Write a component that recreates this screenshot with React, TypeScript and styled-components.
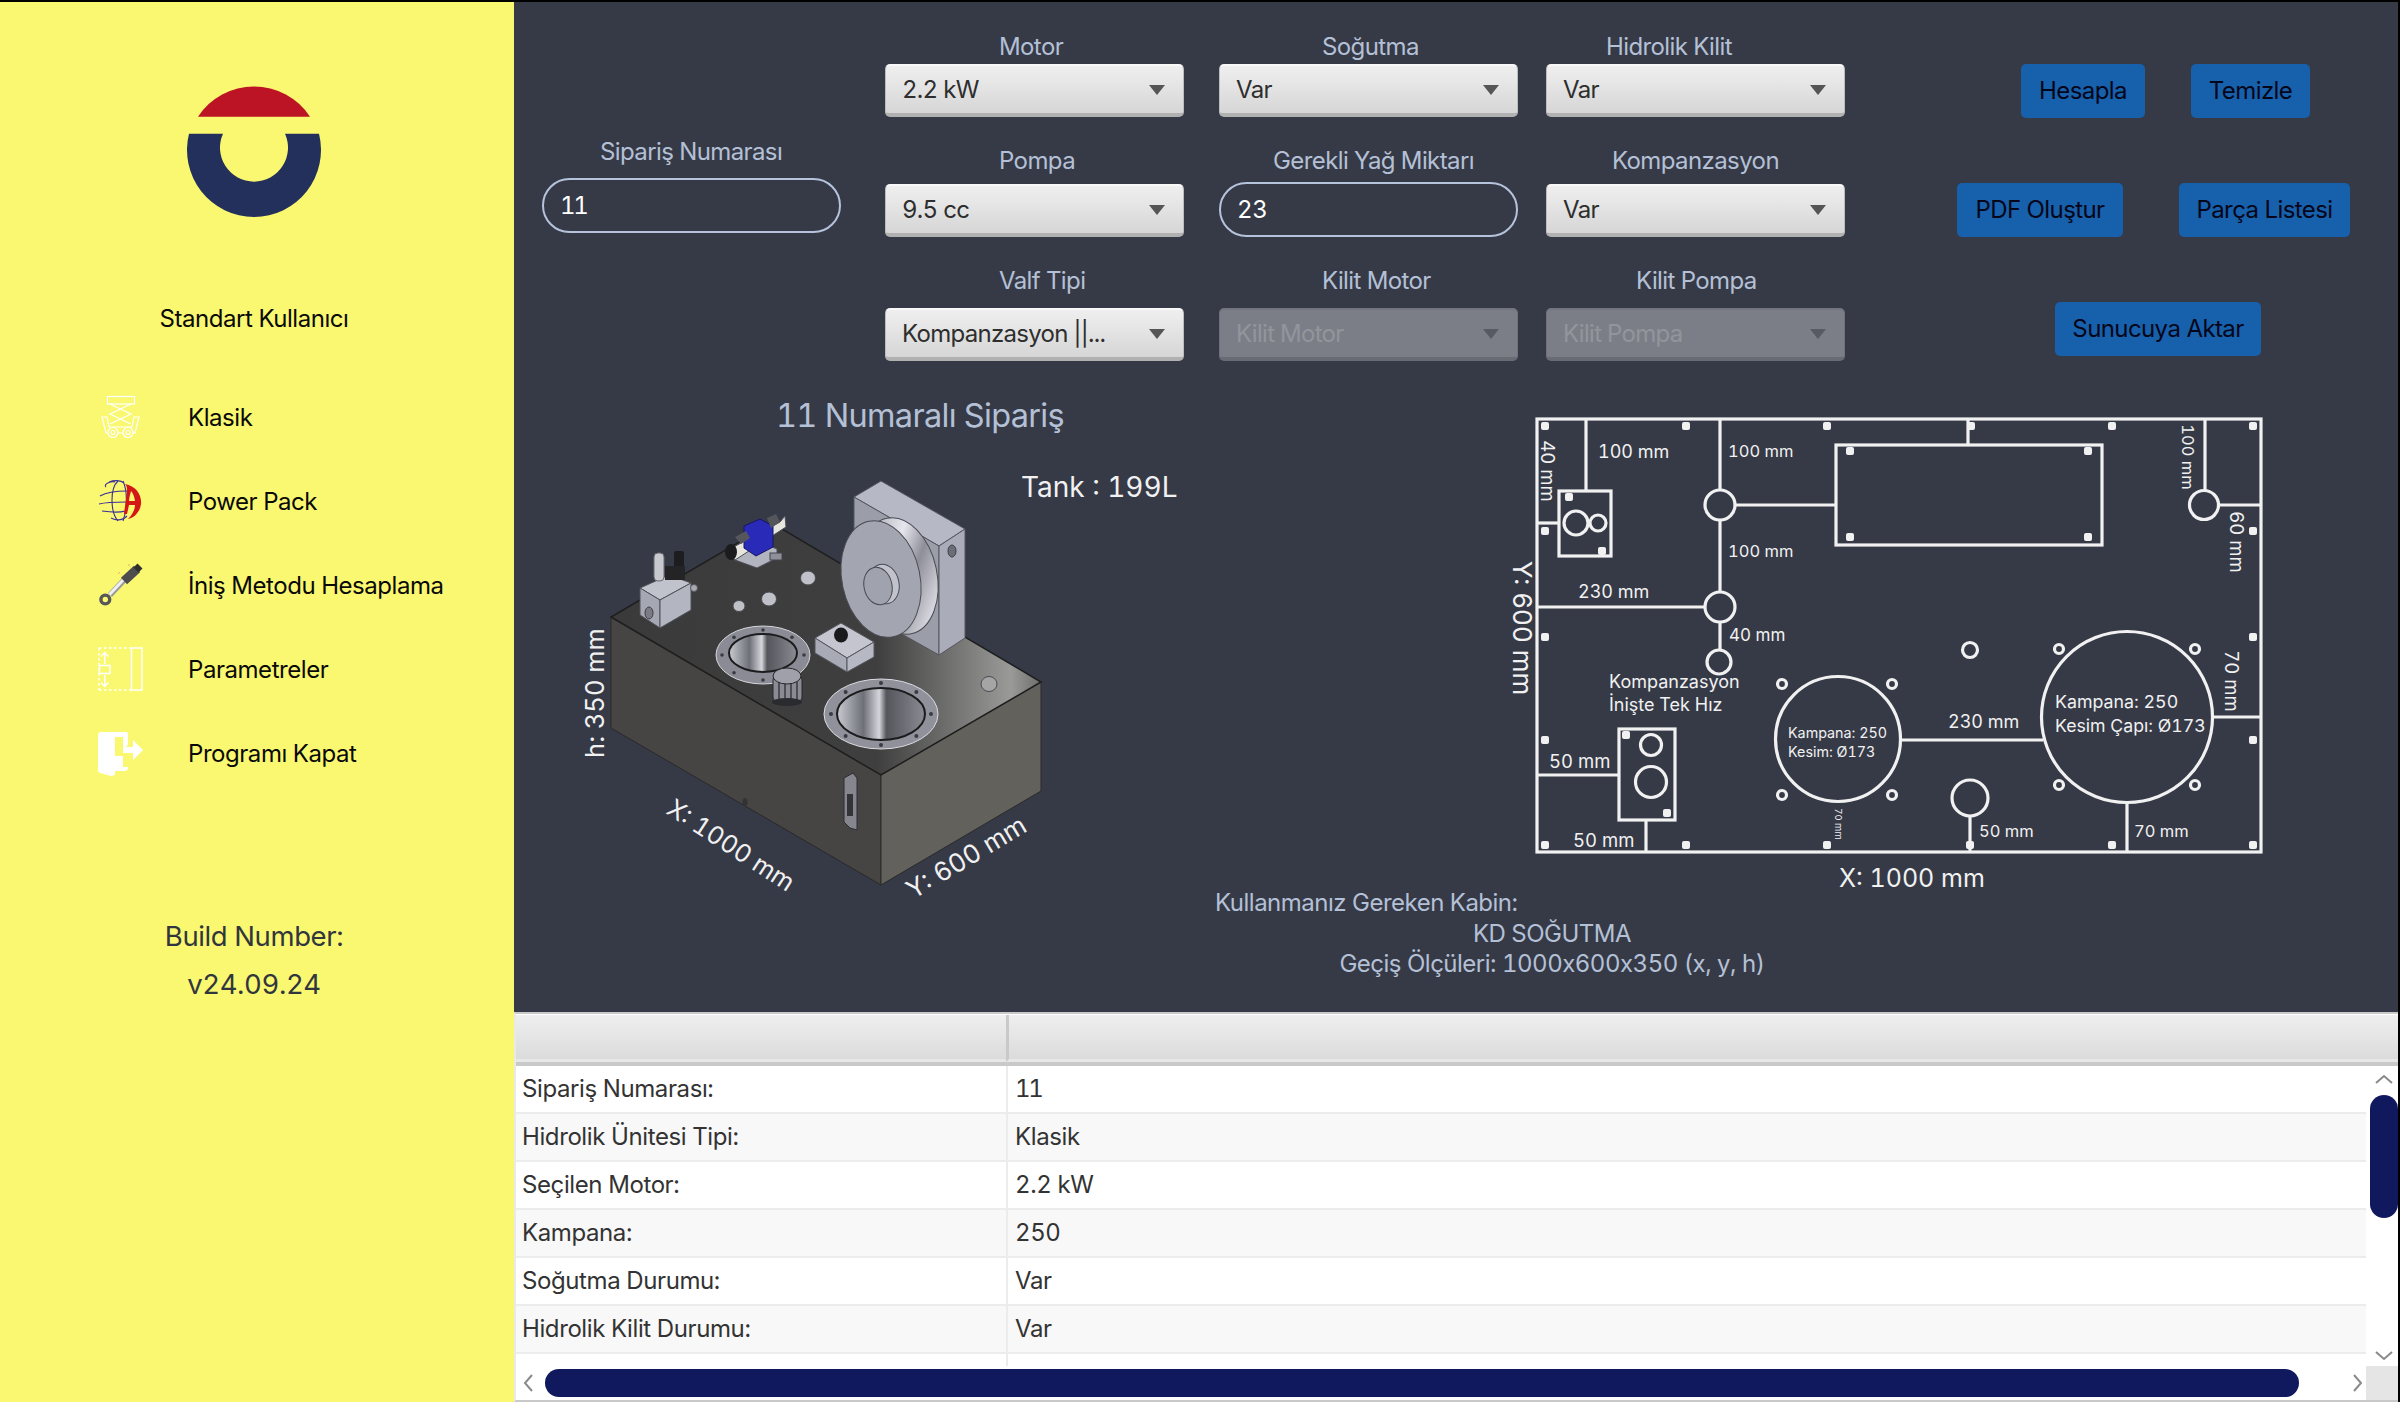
import React from "react";
import styled, { createGlobalStyle } from "styled-components";

const GlobalStyle = createGlobalStyle`
  html, body {
    margin: 0;
    padding: 0;
    background: #000;
  }
  body {
    font-family: "Inter", "Liberation Sans", sans-serif;
    font-variant-numeric: tabular-nums;
  }
  * {
    box-sizing: border-box;
  }
`;

const Screen = styled.div`
  width: 2400px;
  height: 1402px;
  display: flex;
  overflow: hidden;
  padding: 2px 2px 0 0;
  background: #000;
`;

/* sidebar */
const Sidebar = styled.aside`
  width: 514px;
  flex: none;
  display: flex;
  flex-direction: column;
  align-items: stretch;
  padding: 80px 6px 0 0;
  background: #faf870;
`;

const LogoMark = styled.svg`
  display: block;
  width: 134px;
  height: 136px;
  margin: 0 auto;
`;

const UserName = styled.div`
  margin-top: 85px;
  height: 32px;
  line-height: 32px;
  text-align: center;
  font-size: 24px;
  letter-spacing: -0.45px;
  color: #0a0a0a;
`;

const Menu = styled.nav`
  display: flex;
  flex-direction: column;
  margin-top: 40px;
  padding-left: 97px;
`;

const MenuItem = styled.div`
  height: 84px;
  display: flex;
  align-items: center;
  gap: 45px;
  font-size: 24px;
  letter-spacing: -0.45px;
  color: #0a0a0a;
`;

const MenuIcon = styled.svg`
  width: 46px;
  height: 46px;
  flex: none;
`;

const BuildInfo = styled.div`
  margin-top: 117px;
  text-align: center;
  font-size: 27.5px;
  line-height: 48px;
  letter-spacing: -0.4px;
  color: #31363e;
`;

/* main area */
const Main = styled.main`
  flex: 1;
  min-width: 0;
  display: flex;
  flex-direction: column;
  background: #363a47;
`;

const FormArea = styled.section`
  height: 378px;
  flex: none;
  display: flex;
  padding-left: 28px;
`;

const FieldColumn = styled.div<{ $width: number; $top: number }>`
  width: ${p => p.$width}px;
  flex: none;
  display: flex;
  flex-direction: column;
  padding-top: ${p => p.$top}px;
`;

const Field = styled.div<{ $height: number }>`
  width: 299px;
  height: ${p => p.$height}px;
  flex: none;
`;

const FieldLabel = styled.div<{ $offset: number; $gap: number }>`
  height: 26px;
  line-height: 26px;
  padding-left: ${p => p.$offset}px;
  margin-bottom: ${p => p.$gap}px;
  font-size: 24px;
  letter-spacing: -0.6px;
  white-space: nowrap;
  color: #b4c0d6;
`;

const ComboBox = styled.div<{ $disabled?: boolean }>`
  height: 53px;
  display: flex;
  align-items: center;
  justify-content: space-between;
  padding: 0 17px 0 16px;
  border-radius: 5px;
  border: 1px solid ${p => (p.$disabled ? "#6e717a" : "#bdbdbd")};
  border-top: 2px solid ${p => (p.$disabled ? "#73767f" : "#f8f8f8")};
  border-bottom: 4px solid ${p => (p.$disabled ? "#686b74" : "#b1b1b1")};
  background: ${p =>
    p.$disabled
      ? "#7b7e87"
      : "linear-gradient(#efefef, #d6d6d6)"};
  color: ${p => (p.$disabled ? "#92959c" : "#2e2e2e")};
  font-size: 24px;
  letter-spacing: -0.7px;
  white-space: nowrap;
`;

const ComboArrow = styled.span<{ $disabled?: boolean }>`
  width: 0;
  height: 0;
  margin-right: 1px;
  border-left: 8px solid transparent;
  border-right: 8px solid transparent;
  border-top: 10px solid ${p => (p.$disabled ? "#575a62" : "#555")};
`;

const TextField = styled.div`
  height: 55px;
  display: flex;
  align-items: center;
  padding: 0 16px;
  border-radius: 28px;
  border: 2px solid #b6c3dc;
  color: #fff;
  font-size: 24px;
  letter-spacing: -0.4px;
`;

const TightDigits = styled.span`
  letter-spacing: -2.4px;
`;

const ButtonColumn = styled.div`
  display: flex;
  flex-direction: column;
  gap: 65px;
  margin-left: 112px;
  padding-top: 62px;
`;

const ButtonRow = styled.div<{ $indent: number; $gap: number }>`
  display: flex;
  gap: ${p => p.$gap}px;
  padding-left: ${p => p.$indent}px;
`;

const ActionButton = styled.button<{ $width: number }>`
  width: ${p => p.$width}px;
  height: 54px;
  padding: 0 0 2px;
  border: none;
  border-radius: 5px;
  background: #1760ab;
  color: #05061a;
  font-family: inherit;
  font-size: 24px;
  letter-spacing: -0.6px;
  white-space: nowrap;
`;

const PreviewArea = styled.section`
  height: 632px;
  flex: none;
  display: flex;
`;

const TankColumn = styled.div`
  width: 676px;
  flex: none;
  padding-left: 46px;
`;

const OrderTitle = styled.h2`
  margin: 17px 0 0 216px;
  height: 38px;
  line-height: 38px;
  font-size: 32.5px;
  font-weight: 400;
  letter-spacing: -0.7px;
  white-space: nowrap;
  color: #b4c0d6;
`;

const TankFigure = styled.svg`
  display: block;
  width: 640px;
  height: 480px;
  margin-top: 5px;
`;

const DrawingColumn = styled.div`
  flex: 1;
  display: flex;
  flex-direction: column;
`;

const LayoutDrawing = styled.svg`
  display: block;
  width: 770px;
  height: 490px;
  margin: 30px 0 0 316px;
`;

const CabinInfo = styled.div`
  width: 674px;
  margin: -12px 0 0 25px;
  font-size: 24px;
  line-height: 30.5px;
  letter-spacing: -0.5px;
  text-align: center;
  color: #b4c0d6;
`;

const CabinHeading = styled.div`
  text-align: left;
`;

const DrawingText = styled.text<{ $size: number }>`
  font-family: "Inter", "Liberation Sans", sans-serif;
  font-size: ${p => p.$size}px;
  fill: #f1f1f1;
  dominant-baseline: central;
`;

/* table */
const ResultTable = styled.section`
  flex: 1;
  min-height: 0;
  display: flex;
  flex-direction: column;
  border-left: 2px solid #e9e9e9;
  border-top: 2px solid #c9c9c9;
  border-bottom: 2px solid #c9c9c9;
  background: #fff;
`;

const HeaderRow = styled.div`
  height: 52px;
  flex: none;
  display: grid;
  grid-template-columns: 490px 1fr;
  border-top: 1px solid #fff;
  border-bottom: 4px solid #c9c9c9;
`;

const HeaderCell = styled.div`
  background: linear-gradient(#efefef, #dbdbdb);
  border-bottom: 3px solid #e7e7e7;
  & + & {
    border-left: 3px solid #c9c9c9;
  }
`;

const TableBody = styled.div`
  flex: 1;
  min-height: 0;
  display: flex;
`;

const Rows = styled.div`
  flex: 1;
  min-width: 0;
  overflow: hidden;
`;

const Row = styled.div<{ $odd: boolean }>`
  height: 48px;
  display: grid;
  grid-template-columns: 490px 1fr;
  background: ${p => (p.$odd ? "#f8f8f8" : "#fff")};
  border-bottom: 2px solid #ececec;
`;

const Cell = styled.div`
  display: flex;
  align-items: center;
  padding: 0 0 2px 6px;
  font-size: 24px;
  letter-spacing: -0.4px;
  color: #333;
  & + & {
    padding-left: 7px;
    border-left: 2px solid #ececec;
  }
`;

const VerticalBar = styled.div`
  width: 32px;
  flex: none;
  display: flex;
  flex-direction: column;
  align-items: flex-end;
  background: #fff;
`;

const VerticalThumb = styled.div`
  width: 28px;
  height: 123px;
  border-radius: 14px;
  background: #10185e;
`;

const BarArrow = styled.svg<{ $pad: string }>`
  width: 18px;
  height: 10px;
  flex: none;
  margin: ${p => p.$pad};
`;

const HorizontalBar = styled.div`
  height: 34px;
  flex: none;
  display: flex;
  align-items: center;
`;

const HorizontalThumb = styled.div`
  width: 1754px;
  height: 28px;
  margin-left: 12px;
  border-radius: 14px;
  background: #10185e;
`;

const SideArrow = styled.svg<{ $margin: number }>`
  width: 10px;
  height: 18px;
  flex: none;
  margin-left: ${p => p.$margin}px;
`;

const BarCorner = styled.div`
  width: 32px;
  height: 100%;
  flex: none;
  margin-left: auto;
  background: #e5e5e5;
`;

/* drawings */
const Logo = () => (
  <LogoMark viewBox="187 82 134 136">
    <path d="M198 116.7 A67 67 0 0 1 310 116.7 Z" fill="#bc1424" />
    <path
      d="M189 133.7 L223 133.7 A34 34 0 1 0 285 133.7 L319 133.7 A67 67 0 1 1 189 133.7 Z"
      fill="#23305b"
    />
  </LogoMark>
);

const LiftIcon = () => (
  <MenuIcon viewBox="0 0 46 46" fill="none" stroke="#fff" strokeWidth="1.2">
    <rect x="10.5" y="2.5" width="27" height="7.5" />
    <path d="M13 10 L34 20 L13 30 M34 10 L13 20 L34 30" />
    <path d="M5 23 L9 39 L38 39 L42 23 L37 23 L35 33 L12 33 L10 23 Z" />
    <circle cx="16" cy="38.5" r="5" fill="#faf870" />
    <circle cx="16" cy="38.5" r="2" />
    <circle cx="31" cy="38.5" r="5" fill="#faf870" />
    <circle cx="31" cy="38.5" r="2" />
  </MenuIcon>
);

const GlobeIcon = () => (
  <MenuIcon viewBox="0 0 46 46" fill="none">
    <g stroke="#3b2f96" strokeWidth="1.1">
      <path d="M21 3 C13 10 13 34 21 43 M26 3 C31 14 30 32 26 43" />
      <path d="M3 18 C10 14 22 13 30 13 M2 26 C10 24 22 24 29 24 M5 33 C12 34 22 35 28 33" />
      <path d="M12 4 C17 2 24 2 27 5 M9 9 C6 6 14 3 18 4 M14 40 C20 43 26 42 30 38" />
    </g>
    <path
      d="M28 6 C39 8 45 17 44 26 C43 34 37 40 31 41 C36 36 38 31 38 27 L32 27 L30 36 L27 36 L30 14 C30 10 30 8 28 6 Z M32.5 19 L32 23 L38 23 C37.5 19 36 15 34 13 Z"
      fill="#d51616"
    />
  </MenuIcon>
);

const CylinderIcon = () => (
  <MenuIcon viewBox="0 0 46 46" fill="none">
    <path d="M13 33 L28 17" stroke="#9a9a9a" strokeWidth="5.5" />
    <path d="M12.5 32.5 L27.5 16.5" stroke="#f0f0f0" strokeWidth="3" />
    <path d="M27 19 L40 7" stroke="#4d4d4d" strokeWidth="9" />
    <path d="M39 8 L43 4" stroke="#2f2f2f" strokeWidth="7" />
    <circle cx="8.3" cy="37.5" r="4.4" stroke="#575757" strokeWidth="3.4" />
    <path d="M21 12 L23 10 M31 3 L33 3" stroke="#e8b070" strokeWidth="1" />
  </MenuIcon>
);

const ParameterIcon = () => (
  <MenuIcon viewBox="0 0 46 46" fill="none" stroke="#fff" strokeWidth="1.5">
    <path d="M2 2 L34 2 M2 44 L34 44 M2 2 L2 44" strokeDasharray="2.5 2.5" />
    <rect x="34.5" y="2" width="10.5" height="42" />
    <rect x="2.5" y="19.5" width="10.5" height="8" />
    <path d="M7.7 18 L7.7 7 M4 10.5 L7.7 6.5 L11.4 10.5" />
    <path d="M7.7 29 L7.7 40 M4 36.5 L7.7 40.5 L11.4 36.5" />
  </MenuIcon>
);

const ExitIcon = () => (
  <MenuIcon viewBox="0 0 46 46" fill="#fff" stroke="none">
    <path d="M1 4 L3 2 L30 2 L31 4 L31 15 L26 19 L26 7 L18 7 L18 45 L14 46 L3 43 L1 41 Z" />
    <path d="M18 26 L26 26 L26 37 L31 37 L31 39 L29 41 L18 41 Z" />
    <path d="M26 17 L36 17 L36 10 L46 20 L36 30 L36 23 L26 23 Z" />
  </MenuIcon>
);

const ringBolts = (cx: number, cy: number, rx: number, ry: number, r: number) =>
  Array.from({ length: 8 }, (_, i) => {
    const a = (i * Math.PI) / 4;
    return (
      <circle
        key={i}
        cx={cx + rx * Math.cos(a)}
        cy={cy + ry * Math.sin(a)}
        r={r}
        fill="#3a3b40"
      />
    );
  });

const TankDrawing = () => (
  <TankFigure viewBox="560 440 640 480">
    <defs>
      <linearGradient id="tankTop" x1="0" y1="0" x2="1" y2="0">
        <stop offset="0" stopColor="#3a3a3a" />
        <stop offset="0.62" stopColor="#3f3f3f" />
        <stop offset="0.93" stopColor="#9a9a98" />
        <stop offset="1" stopColor="#6d6d6b" />
      </linearGradient>
      <linearGradient id="bore" x1="0" y1="0" x2="1" y2="0">
        <stop offset="0" stopColor="#c9cad2" />
        <stop offset="0.3" stopColor="#6e7078" />
        <stop offset="0.48" stopColor="#d5d6dc" />
        <stop offset="0.56" stopColor="#55565c" />
        <stop offset="1" stopColor="#8a8b93" />
      </linearGradient>
      <linearGradient id="rim" x1="0" y1="0" x2="1" y2="1">
        <stop offset="0" stopColor="#8f909a" />
        <stop offset="0.4" stopColor="#e6e7ee" />
        <stop offset="0.6" stopColor="#8d8e98" />
        <stop offset="0.85" stopColor="#d8d9e0" />
        <stop offset="1" stopColor="#9a9ba4" />
      </linearGradient>
    </defs>
    <polygon points="611,617 881,775 881,885 611,728" fill="#464543" stroke="#2a2a2a" />
    <polygon points="881,775 1041,682 1041,791 881,885" fill="#62615c" stroke="#2a2a2a" />
    <polygon points="611,617 881,775 1041,682 772,523" fill="url(#tankTop)" stroke="#1e1e1e" strokeWidth="1.5" />

    <polygon points="854,497 881,481 965,529 939,546" fill="#b6b8c6" stroke="#55565e" />
    <polygon points="854,497 939,546 939,655 854,607" fill="#9b9da9" stroke="#55565e" />
    <polygon points="939,546 965,529 965,638 939,655" fill="#aaacb9" stroke="#55565e" />
    <ellipse cx="952" cy="551" rx="4" ry="6" fill="#6c6d76" stroke="#3c3d44" />
    <ellipse cx="899" cy="576" rx="38" ry="59" transform="rotate(-12 899 576)" fill="url(#rim)" stroke="#4a4b52" />
    <ellipse cx="881" cy="579" rx="39" ry="59" transform="rotate(-12 881 579)" fill="#a3a5b0" stroke="#4a4b52" />
    <ellipse cx="884" cy="584" rx="15" ry="20" transform="rotate(-12 884 584)" fill="#c1c2cc" stroke="#4a4b52" />
    <ellipse cx="878" cy="586" rx="14" ry="19" transform="rotate(-12 878 586)" fill="#a0a2ad" stroke="#4a4b52" />

    <polygon points="640,588 669,575 691,583 660,600" fill="#c0c2cc" stroke="#4f5058" />
    <polygon points="640,588 660,600 660,628 640,615" fill="#a5a7b3" stroke="#4f5058" />
    <polygon points="660,600 691,583 691,610 660,628" fill="#b3b5c1" stroke="#4f5058" />
    <ellipse cx="649" cy="613" rx="4" ry="6" fill="#7a7b84" stroke="#3c3d44" />
    <rect x="654" y="553" width="10" height="28" rx="4" fill="#c8c9cf" stroke="#6a6b72" />
    <rect x="674" y="551" width="10" height="20" rx="2" fill="#1d1d1f" />
    <rect x="665" y="566" width="20" height="14" fill="#242426" />
    <circle cx="694" cy="588" r="3.5" fill="#a8a9b2" stroke="#55565e" />

    <polygon points="735,553 760,542 777,549 777,558 757,568 735,560" fill="#b2b4c0" stroke="#4f5058" />
    <rect x="770" y="553" width="12" height="7" fill="#8e8f99" stroke="#44454c" />
    <polygon points="728,550 780,522 785,516 786,527 735,560" fill="#e6e6df" stroke="#4f5058" />
    <ellipse cx="731" cy="552" rx="6" ry="8" fill="#1c1c1e" />
    <polygon points="744,526 760,519 773,526 773,547 756,556 744,548" fill="#2a2ab8" stroke="#15156a" />
    <polygon points="735,537 746,531 750,538 741,544" fill="#55565c" />
    <polygon points="767,518 776,514 780,522 771,528" fill="#55565c" />

    <ellipse cx="808" cy="578" rx="7.5" ry="7" fill="#bfc0c8" stroke="#4a4b52" />
    <ellipse cx="769" cy="599" rx="7.5" ry="7" fill="#bfc0c8" stroke="#4a4b52" />
    <ellipse cx="739" cy="606" rx="6" ry="5.5" fill="#bfc0c8" stroke="#4a4b52" />
    <ellipse cx="989" cy="684" rx="8" ry="7.5" fill="#a5a5a5" stroke="#4a4b52" />

    <ellipse cx="763" cy="655" rx="47" ry="29" fill="#8a8b94" stroke="#d5d6dc" />
    {ringBolts(763, 655, 41, 25, 1.8)}
    <ellipse cx="763" cy="653" rx="34" ry="19" fill="url(#bore)" stroke="#1c1c1e" strokeWidth="2" />

    <polygon points="815,638 841,623 874,642 847,658" fill="#c4c5ce" stroke="#55565e" />
    <polygon points="815,638 847,658 847,672 815,653" fill="#a8aab5" stroke="#55565e" />
    <polygon points="847,658 874,642 874,657 847,672" fill="#b6b8c3" stroke="#55565e" />
    <ellipse cx="841" cy="635" rx="7" ry="7.5" fill="#1a1a1c" />

    <rect x="773" y="675" width="29" height="27" rx="5" fill="#8a8b94" stroke="#27282c" />
    <path d="M779 680 V700 M785 680 V702 M791 680 V702 M797 680 V700" stroke="#3a3b40" strokeWidth="1.5" />
    <ellipse cx="787" cy="676" rx="14" ry="8" fill="#9fa0a9" stroke="#27282c" />
    <ellipse cx="787" cy="702" rx="15" ry="4" fill="#2a2b2f" />

    <ellipse cx="881" cy="714" rx="57" ry="35" fill="#90919a" stroke="#dcdde3" />
    {ringBolts(881, 714, 50, 31, 2)}
    <ellipse cx="881" cy="714" rx="44" ry="26" fill="url(#bore)" stroke="#1c1c1e" strokeWidth="2" />

    <polygon points="844,778 853,773 857,778 857,830 850,828 844,822" fill="#85868e" stroke="#2c2d32" />
    <rect x="847" y="794" width="6" height="22" fill="#33343a" />
    <ellipse cx="745" cy="802" rx="2.5" ry="4" fill="#333" />

    <DrawingText $size={28} x="1021" y="487">Tank : 199L</DrawingText>
    <DrawingText $size={25.5} x="594" y="693" textAnchor="middle" transform="rotate(-90 594 693)">h: 350 mm</DrawingText>
    <DrawingText $size={25} x="731" y="845" textAnchor="middle" transform="rotate(33 731 845)">X: 1000 mm</DrawingText>
    <DrawingText $size={26} x="966" y="857" textAnchor="middle" transform="rotate(-31 966 857)">Y: 600 mm</DrawingText>
  </TankFigure>
);

const layoutLines = [
  "M1586 419 V491",
  "M1537 523 H1559",
  "M1720 419 V490",
  "M1720 520 V592",
  "M1720 622 V650",
  "M1735 505 H1836",
  "M1968 419 V445",
  "M1537 607 H1705",
  "M1537 775 H1619",
  "M1646 820 V852",
  "M1900 740 H2043",
  "M1970 816 V852",
  "M2127 803 V852",
  "M2212 717 H2261",
  "M2205 419 V490",
  "M2219 505 H2261",
];

const layoutRects = [
  { x: 1537, y: 419, w: 724, h: 433 },
  { x: 1559, y: 491, w: 52, h: 65 },
  { x: 1836, y: 445, w: 266, h: 100 },
  { x: 1619, y: 729, w: 56, h: 91 },
];

const layoutCircles = [
  { x: 1576, y: 523, r: 12 },
  { x: 1598, y: 523, r: 8 },
  { x: 1720, y: 505, r: 15 },
  { x: 1720, y: 607, r: 15 },
  { x: 1719, y: 662, r: 12 },
  { x: 1651, y: 745, r: 10.5 },
  { x: 1651, y: 782, r: 15.5 },
  { x: 1838, y: 739, r: 62.5 },
  { x: 1782, y: 684, r: 4.5 },
  { x: 1892, y: 684, r: 4.5 },
  { x: 1782, y: 795, r: 4.5 },
  { x: 1892, y: 795, r: 4.5 },
  { x: 2127, y: 717, r: 85.5 },
  { x: 2059, y: 649, r: 4.5 },
  { x: 2195, y: 649, r: 4.5 },
  { x: 2059, y: 785, r: 4.5 },
  { x: 2195, y: 785, r: 4.5 },
  { x: 1970, y: 650, r: 7.5 },
  { x: 1970, y: 798, r: 18 },
  { x: 2204, y: 505, r: 14.5 },
];

const layoutDots = [
  [1545, 426], [1686, 426], [1827, 426], [1971, 426], [2112, 426], [2253, 426],
  [1545, 531], [1545, 637], [1545, 740], [1545, 845],
  [1686, 845], [1827, 845], [1970, 845], [2112, 845], [2253, 845],
  [2253, 531], [2253, 637], [2253, 740],
  [1569, 497], [1602, 551], [1626, 735], [1667, 813],
  [1850, 451], [1850, 537], [2088, 451], [2088, 537],
];

const layoutLabels = [
  { x: 1598, y: 451, size: 18, text: "100 mm" },
  { x: 1728, y: 451, size: 16.5, text: "100 mm" },
  { x: 1728, y: 551, size: 16.5, text: "100 mm" },
  { x: 1578, y: 591, size: 18, text: "230 mm" },
  { x: 1729, y: 635, size: 17, text: "40 mm" },
  { x: 1609, y: 681, size: 18, text: "Kompanzasyon" },
  { x: 1609, y: 704, size: 18, text: "İnişte Tek Hız" },
  { x: 1549, y: 761, size: 18.5, text: "50 mm" },
  { x: 1573, y: 840, size: 18.5, text: "50 mm" },
  { x: 1788, y: 732, size: 14.3, text: "Kampana: 250" },
  { x: 1788, y: 751, size: 14.3, text: "Kesim: Ø173" },
  { x: 2055, y: 701, size: 17.8, text: "Kampana: 250" },
  { x: 2055, y: 725, size: 17.7, text: "Kesim Çapı: Ø173" },
  { x: 1948, y: 721, size: 18, text: "230 mm" },
  { x: 1979, y: 831, size: 16.5, text: "50 mm" },
  { x: 2134, y: 831, size: 16.5, text: "70 mm" },
  { x: 1839, y: 878, size: 25, text: "X: 1000 mm" },
];

const turnedLabels = [
  { x: 1548, y: 471, size: 18.5, text: "40 mm" },
  { x: 1522, y: 628, size: 26, text: "Y: 600 mm" },
  { x: 1838, y: 824, size: 9.5, text: "70 mm" },
  { x: 2188, y: 457, size: 16.5, text: "100 mm" },
  { x: 2237, y: 542, size: 18.5, text: "60 mm" },
  { x: 2232, y: 681, size: 18.5, text: "70 mm" },
];

const LayoutPlan = () => (
  <LayoutDrawing viewBox="1506 410 770 490">
    <g fill="none" stroke="#f1f1f1" strokeWidth="3.2">
      {layoutLines.map(d => (
        <path key={d} d={d} />
      ))}
      {layoutRects.map(r => (
        <rect key={r.x} x={r.x} y={r.y} width={r.w} height={r.h} />
      ))}
      {layoutCircles.map(c => (
        <circle key={`${c.x}-${c.y}`} cx={c.x} cy={c.y} r={c.r} />
      ))}
    </g>
    {layoutDots.map(([x, y]) => (
      <rect key={`${x}-${y}`} x={x - 4} y={y - 4} width="8" height="8" rx="2" fill="#f1f1f1" />
    ))}
    {layoutLabels.map(l => (
      <DrawingText key={`${l.x}-${l.y}`} $size={l.size} x={l.x} y={l.y}>
        {l.text}
      </DrawingText>
    ))}
    {turnedLabels.map(l => (
      <DrawingText
        key={`${l.x}-${l.y}`}
        $size={l.size}
        x={l.x}
        y={l.y}
        textAnchor="middle"
        transform={`rotate(90 ${l.x} ${l.y})`}
      >
        {l.text}
      </DrawingText>
    ))}
  </LayoutDrawing>
);

type FieldDef = {
  label: string;
  offset: number;
  gap: number;
  height: number;
  value: string;
  kind?: "text" | "disabled";
};

const fieldColumns: { width: number; fields: FieldDef[] }[] = [
  {
    width: 334,
    fields: [
      { label: "Motor", offset: 114, gap: 4, height: 114, value: "2.2 kW" },
      { label: "Pompa", offset: 114, gap: 10, height: 120, value: "9.5 cc" },
      { label: "Valf Tipi", offset: 114, gap: 14, height: 94, value: "Kompanzasyon ||..." },
    ],
  },
  {
    width: 327,
    fields: [
      { label: "Soğutma", offset: 103, gap: 4, height: 114, value: "Var" },
      { label: "Gerekli Yağ Miktarı", offset: 54, gap: 8, height: 120, value: "23", kind: "text" },
      { label: "Kilit Motor", offset: 103, gap: 14, height: 94, value: "Kilit Motor", kind: "disabled" },
    ],
  },
  {
    width: 299,
    fields: [
      { label: "Hidrolik Kilit", offset: 60, gap: 4, height: 114, value: "Var" },
      { label: "Kompanzasyon", offset: 66, gap: 10, height: 120, value: "Var" },
      { label: "Kilit Pompa", offset: 90, gap: 14, height: 94, value: "Kilit Pompa", kind: "disabled" },
    ],
  },
];

const tableRows = [
  ["Sipariş Numarası:", <TightDigits key="order">11</TightDigits>],
  ["Hidrolik Ünitesi Tipi:", "Klasik"],
  ["Seçilen Motor:", "2.2 kW"],
  ["Kampana:", "250"],
  ["Soğutma Durumu:", "Var"],
  ["Hidrolik Kilit Durumu:", "Var"],
  ["", ""],
];

const menuItems = [
  { icon: <LiftIcon />, label: "Klasik" },
  { icon: <GlobeIcon />, label: "Power Pack" },
  { icon: <CylinderIcon />, label: "İniş Metodu Hesaplama" },
  { icon: <ParameterIcon />, label: "Parametreler" },
  { icon: <ExitIcon />, label: "Programı Kapat" },
];

const FormField = ({ field }: { field: FieldDef }) => (
  <Field $height={field.height}>
    <FieldLabel $offset={field.offset} $gap={field.gap}>
      {field.label}
    </FieldLabel>
    {field.kind === "text" ? (
      <TextField>{field.value}</TextField>
    ) : (
      <ComboBox $disabled={field.kind === "disabled"}>
        {field.value}
        <ComboArrow $disabled={field.kind === "disabled"} />
      </ComboBox>
    )}
  </Field>
);

export default function App() {
  return (
    <>
      <GlobalStyle />
      <Screen>
        <Sidebar>
          <Logo />
          <UserName>Standart Kullanıcı</UserName>
          <Menu>
            {menuItems.map(item => (
              <MenuItem key={item.label}>
                {item.icon}
                {item.label}
              </MenuItem>
            ))}
          </Menu>
          <BuildInfo>
            Build Number:
            <br />
            v24.09.24
          </BuildInfo>
        </Sidebar>

        <Main>
          <FormArea>
            <FieldColumn $width={343} $top={137}>
              <Field $height={94}>
                <FieldLabel $offset={58} $gap={13}>
                  Sipariş Numarası
                </FieldLabel>
                <TextField>
                  <TightDigits>11</TightDigits>
                </TextField>
              </Field>
            </FieldColumn>
            {fieldColumns.map(column => (
              <FieldColumn key={column.width} $width={column.width} $top={32}>
                {column.fields.map(field => (
                  <FormField key={field.label} field={field} />
                ))}
              </FieldColumn>
            ))}
            <ButtonColumn>
              <ButtonRow $indent={64} $gap={46}>
                <ActionButton $width={124}>Hesapla</ActionButton>
                <ActionButton $width={119}>Temizle</ActionButton>
              </ButtonRow>
              <ButtonRow $indent={0} $gap={56}>
                <ActionButton $width={166}>PDF Oluştur</ActionButton>
                <ActionButton $width={171}>Parça Listesi</ActionButton>
              </ButtonRow>
              <ButtonRow $indent={98} $gap={0}>
                <ActionButton $width={206}>Sunucuya Aktar</ActionButton>
              </ButtonRow>
            </ButtonColumn>
          </FormArea>

          <PreviewArea>
            <TankColumn>
              <OrderTitle>11 Numaralı Sipariş</OrderTitle>
              <TankDrawing />
            </TankColumn>
            <DrawingColumn>
              <LayoutPlan />
              <CabinInfo>
                <CabinHeading>Kullanmanız Gereken Kabin:</CabinHeading>
                KD SOĞUTMA
                <br />
                Geçiş Ölçüleri: 1000x600x350 (x, y, h)
              </CabinInfo>
            </DrawingColumn>
          </PreviewArea>

          <ResultTable>
            <HeaderRow>
              <HeaderCell />
              <HeaderCell />
            </HeaderRow>
            <TableBody>
              <Rows>
                {tableRows.map(([name, value], i) => (
                  <Row key={i} $odd={i % 2 === 1}>
                    <Cell>{name}</Cell>
                    <Cell>{value}</Cell>
                  </Row>
                ))}
              </Rows>
              <VerticalBar>
                <BarArrow $pad="8px 5px 11px 0" viewBox="0 0 18 10" fill="none" stroke="#8a8a8a" strokeWidth="2">
                  <path d="M1 9 L9 2 L17 9" />
                </BarArrow>
                <VerticalThumb />
                <BarArrow $pad="auto 5px 5px 0" viewBox="0 0 18 10" fill="none" stroke="#8a8a8a" strokeWidth="2">
                  <path d="M1 1 L9 8 L17 1" />
                </BarArrow>
              </VerticalBar>
            </TableBody>
            <HorizontalBar>
              <SideArrow $margin={7} viewBox="0 0 10 18" fill="none" stroke="#8a8a8a" strokeWidth="2">
                <path d="M9 1 L2 9 L9 17" />
              </SideArrow>
              <HorizontalThumb />
              <SideArrow $margin={54} viewBox="0 0 10 18" fill="none" stroke="#8a8a8a" strokeWidth="2">
                <path d="M1 1 L8 9 L1 17" />
              </SideArrow>
              <BarCorner />
            </HorizontalBar>
          </ResultTable>
        </Main>
      </Screen>
    </>
  );
}
